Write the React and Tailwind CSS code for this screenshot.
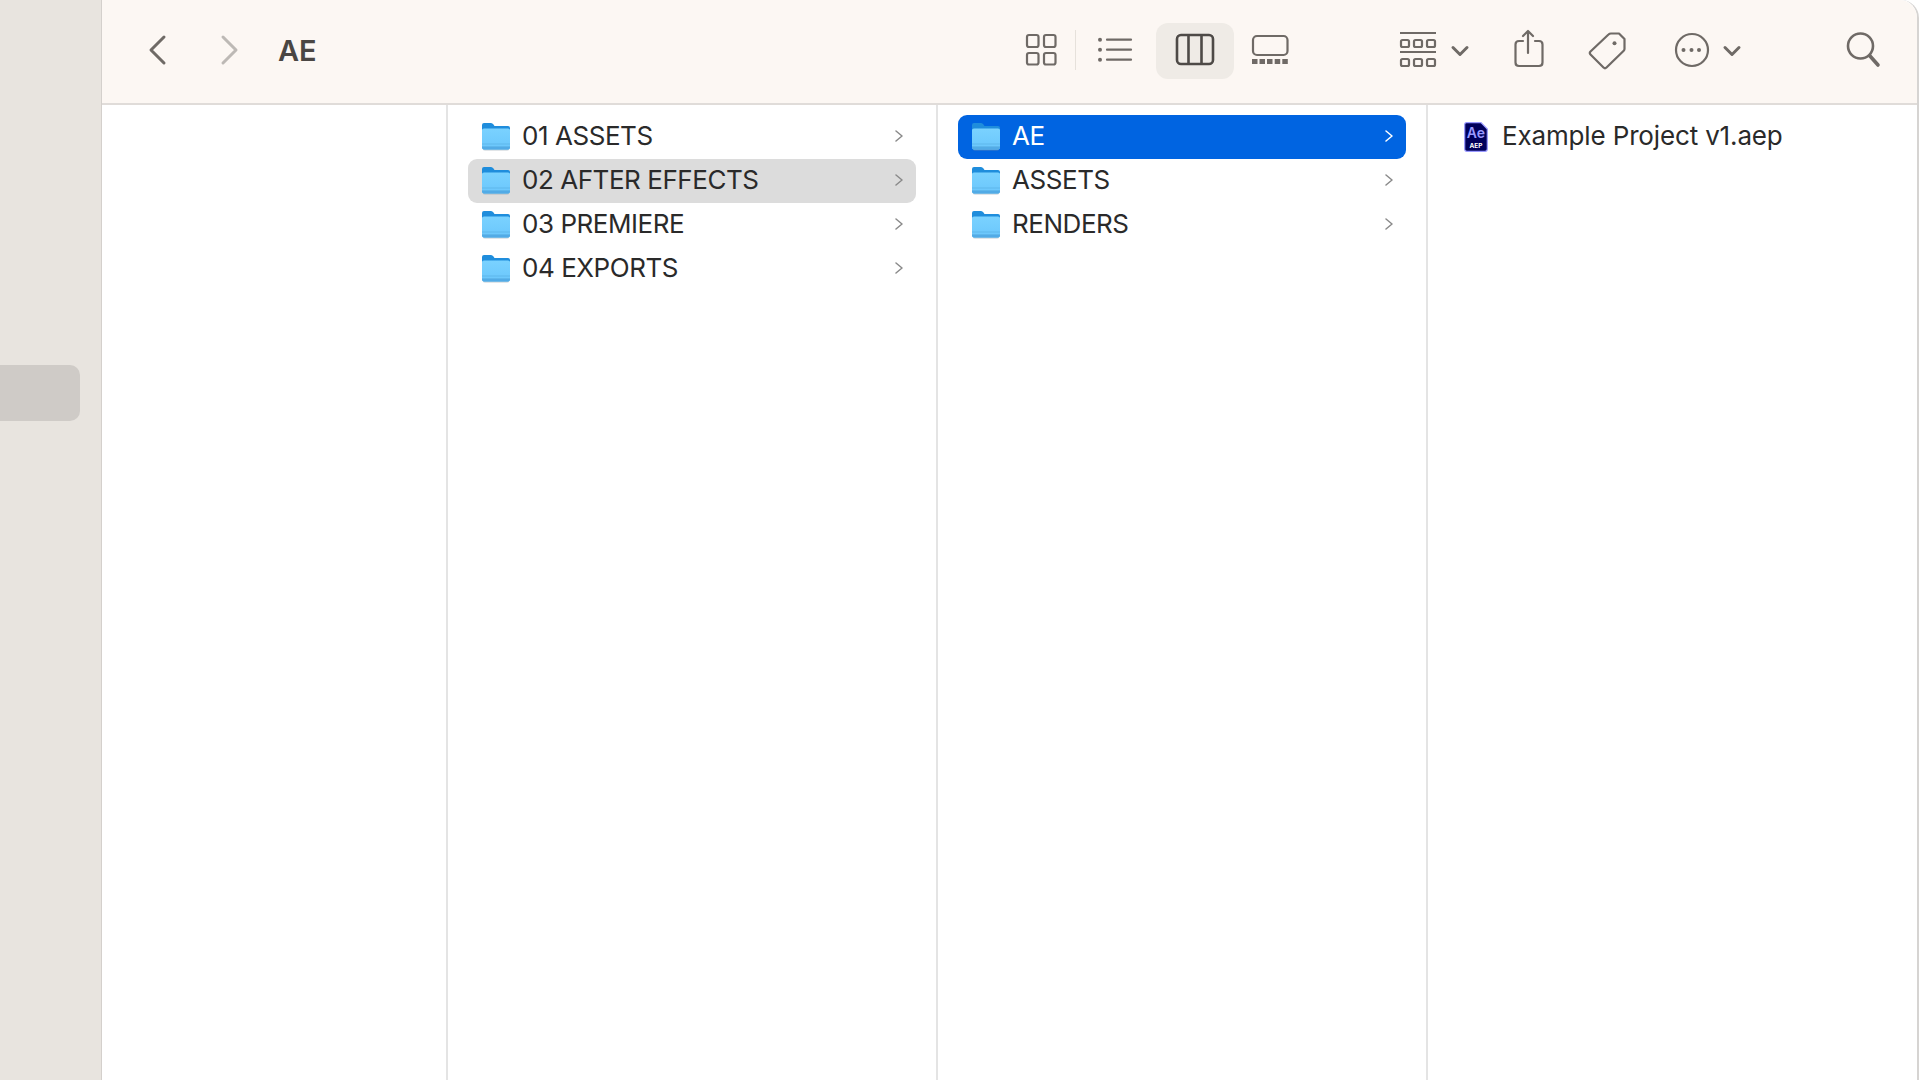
const stroke = "#6f6a66";

const firstColumn = [
  { name: "01 ASSETS" },
  { name: "02 AFTER EFFECTS", state: "open" },
  { name: "03 PREMIERE" },
  { name: "04 EXPORTS" },
];

const secondColumn = [
  { name: "AE", state: "selected" },
  { name: "ASSETS" },
  { name: "RENDERS" },
];

function Icon({ w, className = "", children }) {
  return (
    <svg width={w} height="44" viewBox={`0 0 ${w} 44`} fill="none" stroke={stroke} strokeWidth="2.2"
      strokeLinecap="round" strokeLinejoin="round" className={`shrink-0 ${className}`}>
      {children}
    </svg>
  );
}

function ChevronDown({ className }) {
  return (
    <Icon w={20} className={className}>
      <path d="M3 19.5 L10 26.5 L17 19.5" strokeWidth="3" />
    </Icon>
  );
}

function Folder() {
  return (
    <svg width="28" height="28" viewBox="0 0 28 28" className="shrink-0">
      <defs>
        <linearGradient id="front" x1="0" y1="0" x2="0" y2="1">
          <stop offset="0" stopColor="#7ad2ff" />
          <stop offset="1" stopColor="#6ac6fc" />
        </linearGradient>
      </defs>
      <path d="M1 26 Q1 27.5 3 27.5 H25 Q27 27.5 27 26 Z" fill="#8a9aa5" opacity="0.5" />
      <path d="M0 2 Q0 0 2 0 H9 Q10.5 0 11.5 1.5 L12.5 3 H26 Q28 3 28 5 V12 H0 Z" fill="#1f8ddc" />
      <path d="M0 7 Q0 5.5 2 5.5 H26 Q28 5.5 28 7 V24.5 Q28 26.5 26 26.5 H2 Q0 26.5 0 24.5 Z" fill="url(#front)" />
      <rect x="0" y="20.5" width="28" height="1" fill="#5fb7ec" />
      <rect x="0" y="23" width="28" height="1" fill="#5fb7ec" />
      <path d="M0 24.5 Q0 26.5 2 26.5 H26 Q28 26.5 28 24.5 V24 H0 Z" fill="#52abe6" />
    </svg>
  );
}

function AeFile() {
  return (
    <svg width="24" height="30" viewBox="0 0 24 30" className="shrink-0">
      <path d="M2.5 0.7 H17 L23.3 7 V27 Q23.3 29.3 21 29.3 H3 Q0.7 29.3 0.7 27 V2.5 Q0.7 0.7 2.5 0.7 Z" fill="#00005b" stroke="#9999ff" strokeWidth="1.2" />
      <text x="12" y="15.5" textAnchor="middle" fill="#9999ff" fontSize="14" fontWeight="600" fontFamily="Inter, sans-serif">Ae</text>
      <text x="12" y="25.5" textAnchor="middle" fill="#ffffff" fontSize="6.5" fontWeight="700" fontFamily="Inter, sans-serif">AEP</text>
    </svg>
  );
}

function Row({ name, state }) {
  const bg = state === "selected" ? "bg-[#0064e1] text-white" : state === "open" ? "bg-[#dcdcdc] text-[#2a2a2a]" : "text-[#2a2a2a]";
  return (
    <div className={`flex items-center h-[44px] pl-[14px] pr-[13px] rounded-[9px] ${bg}`}>
      <Folder />
      <span className="ml-[12px] pb-[2px] flex-1 text-[26px] tracking-[-0.45px] leading-none whitespace-nowrap">{name}</span>
      <svg width="8" height="12" viewBox="0 0 8 12" fill="none" className="shrink-0 mb-[2px]" stroke={state === "selected" ? "#ffffff" : "#8a8a8a"} strokeWidth="1.5" strokeLinecap="round" strokeLinejoin="round">
        <path d="M1 1 L7 6 L1 11" />
      </svg>
    </div>
  );
}

function Column({ items }) {
  return (
    <div className="w-[490px] shrink-0 border-r-2 border-[#e4e4e4] pt-[10px] pl-[20px] pr-[20px]">
      {items.map(item => <Row key={item.name} {...item} />)}
    </div>
  );
}

function Toolbar() {
  return (
    <header className="flex items-center justify-between h-[105px] pb-[3px] pr-[36px] bg-[#fcf7f3] border-b-2 border-[#e0dcd9] rounded-tr-[18px]">
      <div className="flex items-center">
        <svg width="20" height="32" viewBox="0 0 20 32" fill="none" stroke="#6f6a66" strokeWidth="3" strokeLinecap="round" strokeLinejoin="round" className="ml-[45px]">
          <path d="M17 3 L4 16 L17 29" />
        </svg>
        <svg width="20" height="32" viewBox="0 0 20 32" fill="none" stroke="#bdb9b5" strokeWidth="3" strokeLinecap="round" strokeLinejoin="round" className="ml-[53px]">
          <path d="M3 3 L16 16 L3 29" />
        </svg>
        <span className="ml-[38px] text-[29px] leading-none font-semibold text-[#4a4643]">AE</span>
      </div>

      <div className="flex items-center">
        <Icon w={34}>
          <rect x="3" y="7" width="11.5" height="12" rx="2" />
          <rect x="20" y="7" width="11.5" height="12" rx="2" />
          <rect x="3" y="25" width="11.5" height="11.5" rx="2" />
          <rect x="20" y="25" width="11.5" height="11.5" rx="2" />
        </Icon>
        <div className="ml-[17px] w-[1px] h-[40px] bg-[#e6e1db]" />
        <Icon w={38} className="ml-[20px]">
          <circle cx="4" cy="11.7" r="2" fill={stroke} stroke="none" />
          <circle cx="4" cy="21.7" r="2" fill={stroke} stroke="none" />
          <circle cx="4" cy="31.7" r="2" fill={stroke} stroke="none" />
          <path d="M11 11.7 H35 M11 21.7 H35 M11 31.7 H35" />
        </Icon>
        <div className="ml-[22px] mt-[1px] w-[78px] h-[56px] flex items-center justify-center bg-[#efebe6] rounded-[12px]">
          <svg width="42" height="44" viewBox="0 0 42 44" fill="none" stroke="#4e4a47" strokeWidth="2.6" strokeLinejoin="round">
            <rect x="3" y="6" width="36" height="29" rx="4" />
            <path d="M14.5 6 V35 M27.5 6 V35" />
          </svg>
        </div>
        <Icon w={40} className="ml-[16px]">
          <rect x="3" y="8" width="34.5" height="19" rx="4" />
          <g fill={stroke} stroke="none">
            <rect x="2" y="31" width="5.5" height="5" />
            <rect x="9.5" y="31" width="5.5" height="5" />
            <rect x="17" y="31" width="5.5" height="5" />
            <rect x="24.7" y="31" width="5.5" height="5" />
            <rect x="32.3" y="31" width="5.5" height="5" />
          </g>
        </Icon>
        <Icon w={40} className="ml-[108px]">
          <path d="M2 5 H38 M2 24 H38" strokeLinecap="butt" />
          <rect x="3" y="12" width="8" height="7" rx="1.5" />
          <rect x="16" y="12" width="8" height="7" rx="1.5" />
          <rect x="29" y="12" width="8" height="7" rx="1.5" />
          <rect x="3" y="31" width="8" height="7" rx="1.5" />
          <rect x="16" y="31" width="8" height="7" rx="1.5" />
          <rect x="29" y="31" width="8" height="7" rx="1.5" />
        </Icon>
        <ChevronDown className="ml-[12px]" />
        <Icon w={34} className="ml-[42px]">
          <path d="M11 13 H7 Q3.5 13 3.5 16.5 V34.5 Q3.5 38 7 38 H27 Q30.5 38 30.5 34.5 V16.5 Q30.5 13 27 13 H23" />
          <path d="M16 3.5 V25 M11 8 L16 3 L21 8" />
        </Icon>
        <Icon w={40} className="ml-[41px]">
          <path d="M24 5.5 H32 L37.5 11 V21 Q37.5 22 36.7 22.8 L19.5 39.5 Q18 41 16.5 39.5 L3.5 26.5 Q2 25 3.5 23.5 L21.5 6.5 Q22.5 5.5 24 5.5 Z" />
          <circle cx="27.5" cy="15.3" r="2" fill={stroke} stroke="none" />
        </Icon>
        <Icon w={38} className="ml-[46px]">
          <circle cx="19" cy="22" r="16" />
          <circle cx="10.5" cy="22" r="2" fill={stroke} stroke="none" />
          <circle cx="18.5" cy="22" r="2" fill={stroke} stroke="none" />
          <circle cx="26" cy="22" r="2" fill={stroke} stroke="none" />
        </Icon>
        <ChevronDown className="ml-[11px]" />
        <Icon w={36} className="ml-[103px]">
          <circle cx="15.5" cy="18" r="12.5" strokeWidth="2.6" />
          <path d="M25 28 L33 37" strokeWidth="3.6" />
        </Icon>
      </div>
    </header>
  );
}

export default function App() {
  return (
    <div className="flex w-[1920px] h-[1080px] overflow-hidden pr-[1px] bg-white font-['Inter',sans-serif]">
      <aside className="w-[102px] shrink-0 flex flex-col pt-[365px] bg-[#e8e4df] border-r border-[#d4d0cc]">
        <div className="w-[80px] h-[56px] bg-[#cfcbc7] rounded-r-[10px]" />
      </aside>

      <main className="flex-1 flex flex-col min-w-0 border-r-2 border-[#d6d4d2] rounded-tr-[18px]">
        <Toolbar />
        <div className="flex flex-1 min-h-0">
          <div className="w-[346px] shrink-0 border-r-2 border-[#e4e4e4]" />
          <Column items={firstColumn} />
          <Column items={secondColumn} />
          <div className="flex-1 pt-[10px] pl-[36px]">
            <div className="flex items-center h-[44px]">
              <AeFile />
              <span className="ml-[14px] pb-[2px] text-[26px] tracking-[-0.15px] leading-none whitespace-nowrap text-[#2a2a2a]">Example Project v1.aep</span>
            </div>
          </div>
        </div>
      </main>
    </div>
  );
}
